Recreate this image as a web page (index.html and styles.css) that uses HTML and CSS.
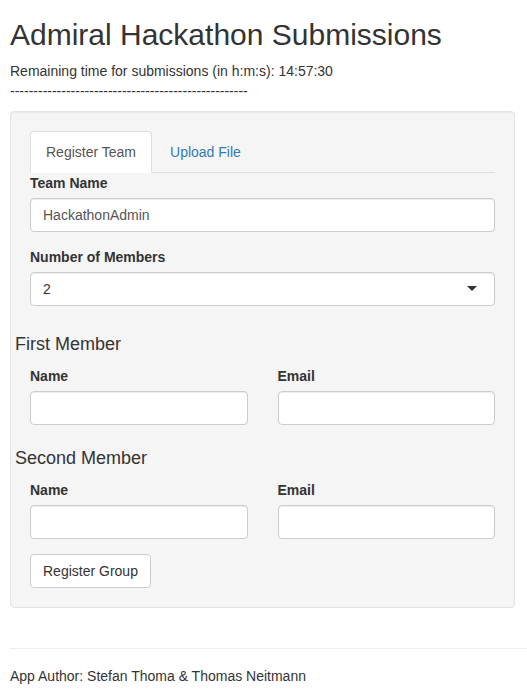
FILE: index.html
```html
<!DOCTYPE html>
<html lang="en">
<head>
<meta charset="utf-8">
<title>Admiral Hackathon Submissions</title>
<link rel="stylesheet" href="styles.css">
</head>
<body>
<div class="page">
  <h2 class="title">Admiral Hackathon Submissions</h2>
  <div class="timer">Remaining time for submissions (in h:m:s): 14:57:30</div>
  <div class="dashes">---------------------------------------------------</div>
  <div class="well">
    <ul class="tabs">
      <li class="tab active"><a href="#" class="tab-link">Register Team</a></li>
      <li class="tab"><a href="#" class="tab-link">Upload File</a></li>
    </ul>
    <div class="tab-content">
      <div class="form-group">
        <label class="field-label">Team Name</label>
        <input class="form-control team-input" type="text" value="HackathonAdmin">
      </div>
      <div class="form-group select-group">
        <label class="field-label">Number of Members</label>
        <div class="select-box">2</div>
      </div>

      <h4 class="member-title">First Member</h4>
      <div class="member-row">
        <div class="form-group col">
          <label class="field-label">Name</label>
          <input class="form-control" type="text">
        </div>
        <div class="form-group col">
          <label class="field-label">Email</label>
          <input class="form-control" type="text">
        </div>
      </div>

      <h4 class="member-title">Second Member</h4>
      <div class="member-row">
        <div class="form-group col">
          <label class="field-label">Name</label>
          <input class="form-control" type="text">
        </div>
        <div class="form-group col">
          <label class="field-label">Email</label>
          <input class="form-control" type="text">
        </div>
      </div>

      <button class="btn" type="button">Register Group</button>
    </div>
  </div>
  <hr class="footer-rule">
  <p class="footer">App Author: Stefan Thoma &amp; Thomas Neitmann</p>
</div>
</body>
</html>
```

FILE: styles.css
```css
* {
  box-sizing: border-box;
}

html, body {
  margin: 0;
  padding: 0;
  background: #fff;
}

body {
  font-family: "Liberation Sans", Arial, Helvetica, sans-serif;
  font-size: 14px;
  line-height: 20px;
  color: #333;
}

.page {
  display: flex;
  flex-direction: column;
  padding: 0 12px 0 10px;
}

.title {
  font-size: 30px;
  font-weight: 400;
  line-height: 33px;
  margin: 18px 0 10px 0;
  color: #333;
}

.timer,
.dashes {
  line-height: 20px;
}

.well {
  margin-top: 10px;
  margin-bottom: 20px;
  padding: 19px;
  background-color: #f5f5f5;
  border: 1px solid #e3e3e3;
  border-radius: 4px;
  box-shadow: inset 0 1px 1px rgba(0, 0, 0, 0.05);
}

.tabs {
  list-style: none;
  margin: 0;
  padding: 0;
  display: flex;
  border-bottom: 1px solid #ddd;
}

.tab {
  margin-right: 2px;
  margin-bottom: -1px;
}

.tab-link {
  display: block;
  padding: 10px 15px;
  line-height: 20px;
  border: 1px solid transparent;
  border-radius: 4px 4px 0 0;
  color: #337ab7;
  text-decoration: none;
}

.tab.active .tab-link {
  color: #555;
  background-color: #fff;
  border-color: #ddd #ddd transparent #ddd;
}

.tab-content {
  display: flex;
  flex-direction: column;
}

.form-group {
  margin-bottom: 15px;
}

.select-group {
  padding-bottom: 5px;
}

.field-label {
  display: inline-block;
  font-weight: 700;
  margin-bottom: 5px;
}

.form-control {
  display: block;
  width: 100%;
  height: 34px;
  padding: 6px 12px;
  font-family: inherit;
  font-size: 14px;
  line-height: 20px;
  color: #555;
  background-color: #fff;
  border: 1px solid #ccc;
  border-radius: 4px;
  box-shadow: inset 0 1px 1px rgba(0, 0, 0, 0.075);
  outline: none;
}

.select-box {
  position: relative;
  height: 34px;
  padding: 6px 12px;
  line-height: 20px;
  color: #333;
  background-color: #fff;
  border: 1px solid #ccc;
  border-radius: 4px;
  box-shadow: inset 0 1px 1px rgba(0, 0, 0, 0.075);
}

.select-box::after {
  content: "";
  position: absolute;
  top: 50%;
  right: 17px;
  margin-top: -3px;
  width: 0;
  height: 0;
  border-style: solid;
  border-width: 5px 5px 0 5px;
  border-color: #333 transparent transparent transparent;
}

.member-title {
  font-size: 18px;
  font-weight: 400;
  line-height: 19.8px;
  margin: 9px 0 11px -15px;
  color: #333;
}

.member-row {
  display: grid;
  grid-template-columns: 1fr 1fr;
  margin: 0 -15px;
}

.col {
  padding: 0 15px;
}

.btn {
  align-self: flex-start;
  height: 34px;
  padding: 6px 12px;
  font-family: inherit;
  font-size: 14px;
  line-height: 20px;
  color: #333;
  background-color: #fff;
  border: 1px solid #ccc;
  border-radius: 4px;
  cursor: pointer;
}

.footer-rule {
  height: 0;
  margin: 20px -12px 17px 0;
  border: 0;
  border-top: 1px solid #eee;
}

.footer {
  margin: 0;
  line-height: 20px;
}
```
